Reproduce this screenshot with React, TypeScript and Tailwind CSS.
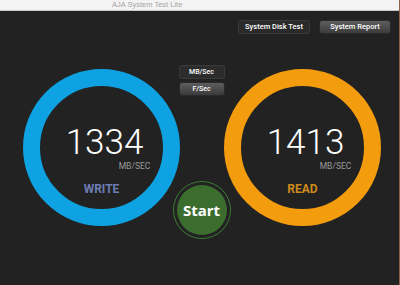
const gauges = [
  { value: "1334", label: "WRITE", ring: "border-[#0ea2e2]", labelColor: "text-[#6c7db3]" },
  { value: "1413", label: "READ", ring: "border-[#f39c0e]", labelColor: "text-[#cc8a1c]" },
];

function Gauge({ value, label, ring, labelColor }: (typeof gauges)[number]) {
  return (
    <div className={`w-[157px] h-[157px] shrink-0 rounded-full border-[17px] ${ring} mt-[4px] flex flex-col items-center`}>
      <div className="flex flex-col items-end pt-[41px] ml-[13px]">
        <div className="text-[35px] leading-[32px] font-light text-white mr-[7px]">{value}</div>
        <div className="text-[8.5px] leading-[8.5px] text-[#9a9a9a] mt-[3px]">MB/SEC</div>
      </div>
      <div className={`text-[12px] leading-[12px] font-bold mt-[12px] ${labelColor}`}>{label}</div>
    </div>
  );
}

function SmallButton({ children, active }: { children: string; active?: boolean }) {
  return (
    <div
      className={`h-[14px] w-[46px] shrink-0 rounded-[3px] flex items-center justify-center text-[7px] font-medium text-white border ${
        active
          ? "bg-gradient-to-b from-[#5e5e5e] to-[#3a3a3a] border-[#2a2a2a]"
          : "bg-[#2c2c2c] border-[#3a3a3a]"
      }`}
    >
      {children}
    </div>
  );
}

export default function App() {
  return (
    <div className="w-[400px] h-[285px] bg-[#222222] flex flex-col overflow-hidden border-r border-[#8e5e4c] font-['Roboto',sans-serif]">
      <div className="h-[11px] shrink-0 bg-[#f3f3f3] border-b border-[#c8c8c8] flex items-center pl-[112px]">
        <span className="text-[7.5px] leading-none text-[#a5a5a5] font-['Liberation_Sans',sans-serif]">AJA System Test Lite</span>
      </div>

      <div className="flex justify-end gap-[9px] pr-[8px] mt-[9px] shrink-0">
        <div className="h-[14px] w-[72px] rounded-[3px] bg-[#2a2a2a] border border-[#3a3a3a] flex items-center justify-center text-[7.5px] font-medium text-white">
          System Disk Test
        </div>
        <div className="h-[14px] w-[72px] rounded-[3px] bg-gradient-to-b from-[#5e5e5e] to-[#3c3c3c] border border-[#2a2a2a] flex items-center justify-center text-[7.5px] font-medium text-white">
          System Report
        </div>
      </div>

      <div className="flex items-start pl-[23px] mt-[31px]">
        <Gauge {...gauges[0]} />
        <div className="w-[45px] shrink-0 flex flex-col items-center gap-[3px] -ml-[1px]">
          <SmallButton>MB/Sec</SmallButton>
          <SmallButton active>F/Sec</SmallButton>
          <div className="mt-[82px] w-[58px] h-[58px] shrink-0 rounded-full border-[1.5px] border-[#3b7d35] flex items-center justify-center">
            <div className="w-[50px] h-[50px] rounded-full bg-[#3b6d2f] flex items-center justify-center">
              <span className="text-white font-bold text-[15px] leading-none font-['Open_Sans',sans-serif] mt-[1px]">Start</span>
            </div>
          </div>
        </div>
        <Gauge {...gauges[1]} />
      </div>
    </div>
  );
}
